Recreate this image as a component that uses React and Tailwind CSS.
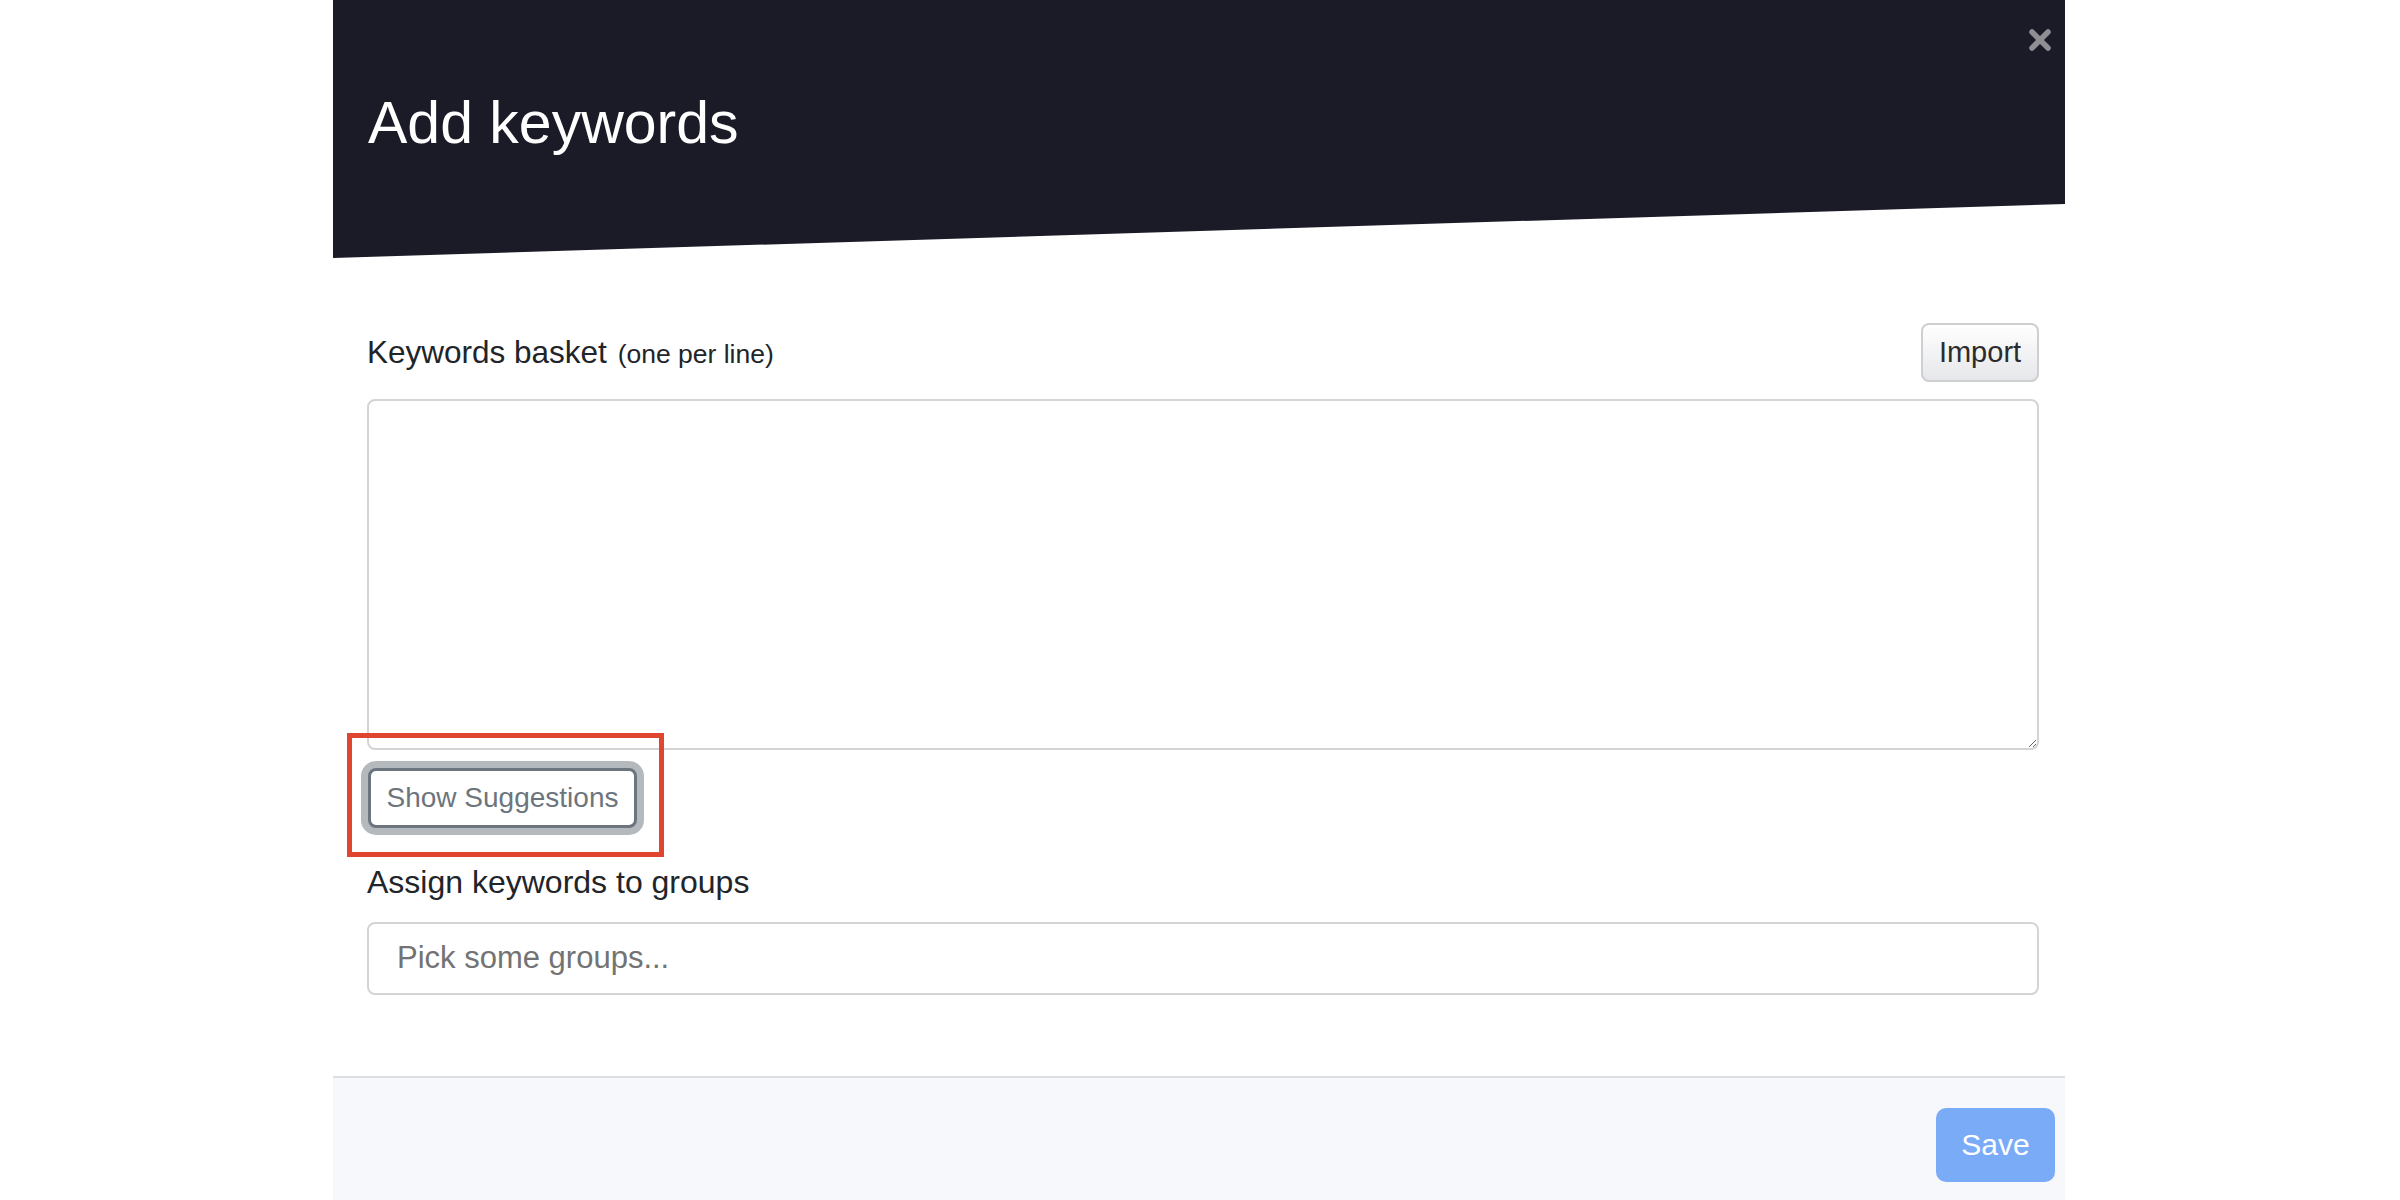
import React from "react";

const App = () => {
  return (
    <div className="w-[2400px] h-[1200px] overflow-hidden bg-white font-['Liberation_Sans',Arial,sans-serif] text-[#212529]">
      <div className="relative ml-[333px] w-[1732px] h-[1200px] flex flex-col bg-white">
        {/* Slanted dark header */}
        <div className="relative h-[258px] shrink-0 bg-[#1a1b26] pt-[94px] pl-[35px] [clip-path:polygon(0_0,100%_0,100%_79.1%,0_100%)]">
          <h2 className="text-[59px] leading-none font-normal text-white">Add keywords</h2>
          <button className="absolute top-[28px] right-[13px] w-[24px] h-[24px]" aria-label="Close">
            <svg viewBox="0 0 24 24" className="w-[24px] h-[24px]">
              <path d="M4 4 L20 20 M20 4 L4 20" stroke="#8e8e93" strokeWidth="5.5" strokeLinecap="round" />
            </svg>
          </button>
        </div>

        {/* Body */}
        <div className="flex-1 flex flex-col pt-[65px] pl-[34px] pr-[26px]">
          <div className="flex items-center justify-between h-[59px]">
            <label className="text-[31.5px] leading-none">
              Keywords basket <span className="text-[26.5px] ml-[2px]">(one per line)</span>
            </label>
            <button className="h-[59px] w-[118px] rounded-[8px] border-2 border-[#cfcfd2] bg-gradient-to-b from-white to-[#e6e7ea] text-[29px] leading-none text-[#2b2b2b]">
              Import
            </button>
          </div>

          <textarea className="mt-[17px] h-[351px] w-full rounded-[8px] border-2 border-[#d4d4d6] bg-white outline-none" />

          <div className="relative mt-[18px]">
            <button className="ml-[1px] h-[60px] w-[269px] rounded-[8px] border-[3px] border-[#6c757d] bg-white text-[28px] leading-none text-[#6c757d] shadow-[0_0_0_7px_#b4b9be]">
              Show Suggestions
            </button>
            {/* annotation box */}
            <div className="absolute left-[-20px] top-[-35px] w-[317px] h-[124px] border-[5px] border-[#e0452f]" />
          </div>

          <div className="mt-[38px] text-[32px] leading-none">Assign keywords to groups</div>

          <div className="mt-[24px] h-[73px] w-full rounded-[8px] border-2 border-[#d4d4d6] flex items-center pl-[28px] text-[31px] text-[#737373]">
            Pick some groups...
          </div>
        </div>

        {/* Footer */}
        <div className="h-[124px] shrink-0 border-t-2 border-[#dedfe3] bg-[#f7f8fb] flex justify-end pt-[30px] pr-[10px]">
          <button className="h-[74px] w-[119px] rounded-[10px] bg-[#7aabf7] text-[30px] leading-none text-white">
            Save
          </button>
        </div>
      </div>
    </div>
  );
};

export default App;
